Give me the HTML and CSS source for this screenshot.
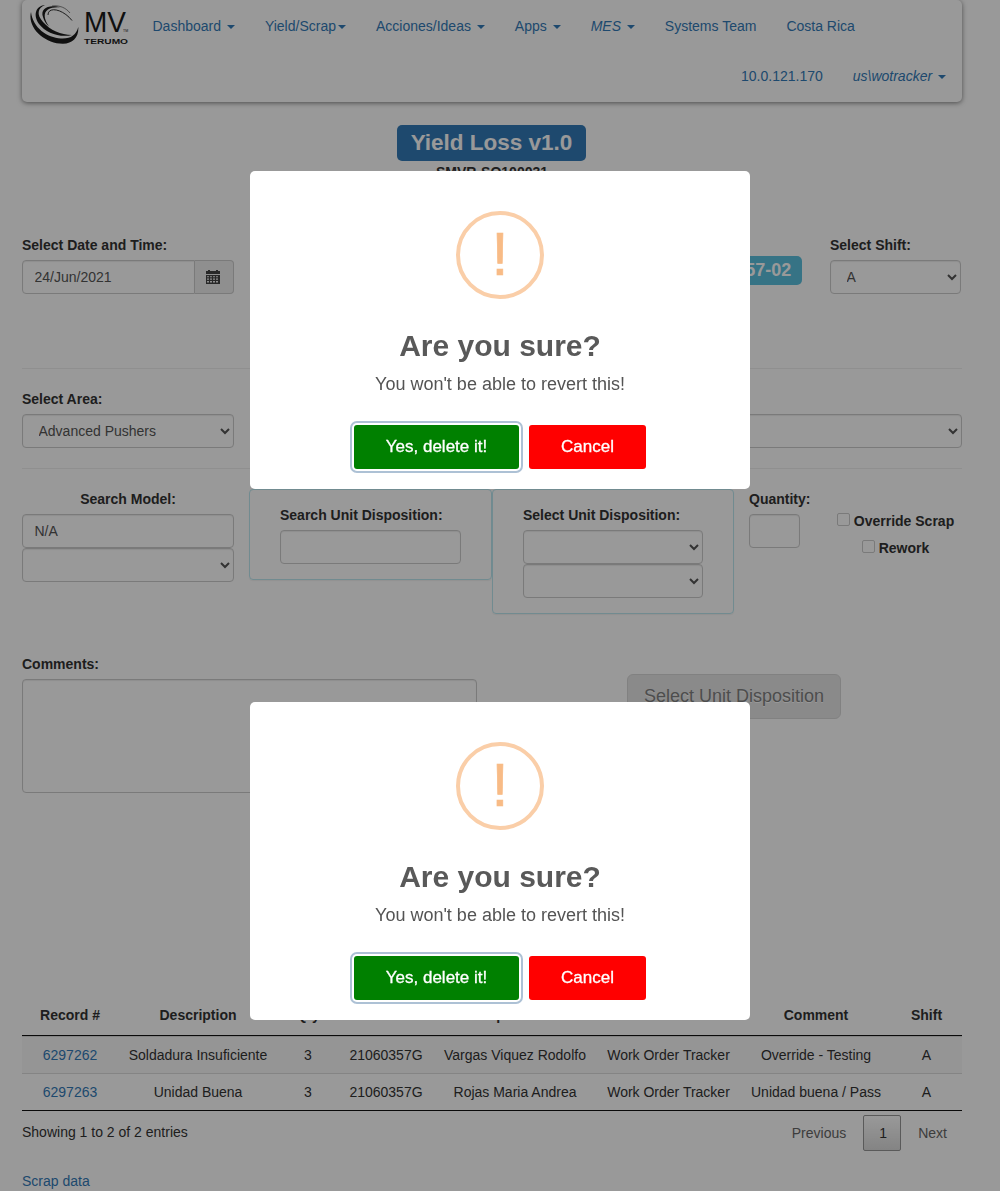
FILE: index.html
```html
<!DOCTYPE html>
<html lang="en">
<head>
<meta charset="utf-8">
<title>Yield Loss v1.0</title>
<link rel="stylesheet" href="styles.css">
</head>
<body>
<div class="page">
  <nav class="navbar">
    <div class="nav-row">
      <svg class="logo" viewBox="0 0 100 46" width="100" height="46" aria-label="MV Terumo">
        <g fill="#1c1c1c">
          <path d="M1 11C-3 27 15 43 33 42.800C43 42.500 49 36 48.300 26C46 34 41 38 31 37.500C17 36.500 3 27 1 11Z"/>
          <path d="M15 4C5 5 3 15 9 23C16 32 30 37 42 34C31 34 20 29 13 21C6 13 8 7 15 4Z"/>
          <path d="M31 6.500C18 3 10 8 13 16C14 20 16 23 19 25.500C14 18 13 12 18 8.500C21 6.500 26 6 31 6.500Z"/>
        </g>
        <g fill="none" stroke="#1c1c1c" stroke-width=".9">
          <path d="M18 14C18 5 33 8 42 19.500"/>
          <path d="M22 5C30 4 36 7 40 12" opacity=".6"/>
        </g>
        <text class="logo-mv" x="54" y="31" textLength="42" lengthAdjust="spacingAndGlyphs">MV</text>
        <text class="logo-name" x="54" y="42.500" textLength="44" lengthAdjust="spacingAndGlyphs">TERUMO</text>
        <text class="logo-tm" x="93" y="31">TM</text>
      </svg>
      <a>Dashboard <i class="caret"></i></a>
      <a>Yield/Scrap<i class="caret"></i></a>
      <a>Acciones/Ideas <i class="caret"></i></a>
      <a>Apps <i class="caret"></i></a>
      <a><em>MES</em> <i class="caret"></i></a>
      <a>Systems Team</a>
      <a>Costa Rica</a>
    </div>
    <div class="nav-row nav-right">
      <a>10.0.121.170</a>
      <a><em>us\wotracker</em> <i class="caret"></i></a>
    </div>
  </nav>

  <header class="heading">
    <h3 class="badge badge-primary">Yield Loss v1.0</h3>
    <strong>SMVR-SQ100031</strong>
  </header>

  <section class="row row-date">
    <div class="field">
      <label>Select Date and Time:</label>
      <div class="input-group">
        <input class="control" value="24/Jun/2021">
        <span class="addon">
          <svg width="14" height="15" viewBox="0 0 14 15" fill="#444">
            <path d="M0 1h2V0h2v1h6V0h2v1h2v3H0z"/>
            <path fill-rule="evenodd" d="M0 5h14v9H0zM1 6.300v1h2v-1zm3 0v1h2v-1zm3 0v1h2v-1zm3 0v1h2v-1zM1 8.500v1.200h2V8.500zm3 0v1.200h2V8.500zm3 0v1.200h2V8.500zm3 0v1.200h2V8.500zM1 11v1.500h2V11zm3 0v1.500h2V11zm3 0v1.500h2V11zm3 0v1.500h2V11z"/>
          </svg>
        </span>
      </div>
    </div>
    <div class="badge badge-info">21060357-02</div>
    <div class="field">
      <label>Select Shift:</label>
      <select class="control"><option>A</option></select>
    </div>
  </section>

  <section class="row row-area">
    <div class="field">
      <label>Select Area:</label>
      <select class="control"><option>Advanced Pushers</option></select>
    </div>
    <div class="field">
      <label>Select Defect:</label>
      <select class="control"><option></option></select>
    </div>
  </section>

  <section class="row row-model">
    <div class="field">
      <label class="centered">Search Model:</label>
      <input class="control" value="N/A">
      <select class="control"><option></option></select>
    </div>
    <div class="panel panel-search">
      <label>Search Unit Disposition:</label>
      <input class="control">
    </div>
    <div class="panel">
      <label>Select Unit Disposition:</label>
      <select class="control"><option></option></select>
      <select class="control"><option></option></select>
    </div>
    <div class="field quantity">
      <label>Quantity:</label>
      <input class="control">
    </div>
    <div class="checks">
      <label><i class="box"></i>Override Scrap</label>
      <label><i class="box"></i>Rework</label>
    </div>
  </section>

  <section class="row row-comments">
    <div class="field">
      <label>Comments:</label>
      <textarea class="control comments"></textarea>
    </div>
    <button class="disposition">Select Unit Disposition</button>
  </section>

  <table class="records">
    <colgroup><col class="w96"><col class="w160"><col class="w60"><col class="w96"><col class="w162"><col class="w145"><col class="w150"><col></colgroup>
    <thead>
      <tr><th>Record #</th><th>Description</th><th>Qty</th><th>Lot</th><th>Operator</th><th>User</th><th>Comment</th><th>Shift</th></tr>
    </thead>
    <tbody>
      <tr><td><a>6297262</a></td><td>Soldadura Insuficiente</td><td>3</td><td>21060357G</td><td>Vargas Viquez Rodolfo</td><td>Work Order Tracker</td><td>Override - Testing</td><td>A</td></tr>
      <tr><td><a>6297263</a></td><td>Unidad Buena</td><td>3</td><td>21060357G</td><td>Rojas Maria Andrea</td><td>Work Order Tracker</td><td>Unidad buena / Pass</td><td>A</td></tr>
    </tbody>
  </table>
  <div class="table-footer">
    <span class="info">Showing 1 to 2 of 2 entries</span>
    <div class="pager"><span>Previous</span><span class="current">1</span><span>Next</span></div>
  </div>
  <a class="scrap-link">Scrap data</a>
</div>

<div class="overlay">
  <div class="modal">
    <div class="warning">!</div>
    <h2>Are you sure?</h2>
    <p>You won't be able to revert this!</p>
    <div class="actions"><button class="confirm">Yes, delete it!</button><button class="cancel">Cancel</button></div>
  </div>
  <div class="modal">
    <div class="warning">!</div>
    <h2>Are you sure?</h2>
    <p>You won't be able to revert this!</p>
    <div class="actions"><button class="confirm">Yes, delete it!</button><button class="cancel">Cancel</button></div>
  </div>
</div>
</body>
</html>
```
FILE: styles.css
```css
* { box-sizing: border-box; }

body {
  margin: 0;
  height: 1191px;
  overflow: hidden;
  background: #fff;
  color: #333;
  font: 14px/20px "Liberation Sans", Arial, sans-serif;
}

button, input, select, textarea { font: inherit; }
a { color: #337ab7; }
label { display: block; font-weight: bold; margin-bottom: 5px; white-space: nowrap; }

.page { width: 940px; margin-left: 22px; }

/* Navigation */
.navbar {
  height: 102px;
  border-radius: 5px;
  box-shadow: 0 1px 5px rgba(0, 0, 0, .5);
}
.nav-row { display: flex; height: 51px; padding-top: 1px; }
.nav-row a { padding: 15px 15px 0; white-space: nowrap; }
.nav-right { justify-content: flex-end; padding-top: 0; padding-right: 1px; }
.logo { flex: none; margin: 0 -14.500px 0 8px; }
.logo + a { padding-left: 37px; }
.logo-mv { font: 29px "Liberation Sans Narrow", "Liberation Sans", sans-serif; fill: #1c1c1c; }
.logo-name { font: bold 8px "Liberation Sans", sans-serif; fill: #1c1c1c; }
.logo-tm { font: 3.500px "Liberation Sans", sans-serif; fill: #1c1c1c; }
.caret {
  display: inline-block;
  margin-left: 2px;
  vertical-align: middle;
  border-top: 4px solid #337ab7;
  border-left: 4px solid transparent;
  border-right: 4px solid transparent;
}

/* Heading */
.heading {
  display: flex;
  flex-direction: column;
  align-items: center;
  height: 133px;
  padding-top: 23px;
}
.badge { color: #fff; font-weight: bold; border-radius: 5px; white-space: nowrap; }
.badge-primary { margin: 0 1px 1px 0; padding: 0 13.700px; background: #337ab7; font-size: 22.500px; line-height: 35px; height: 36px; }
.badge-info { margin: 21px 28px 0 auto; padding: 0 10.800px; background: #5bc0de; font-size: 18px; line-height: 28px; height: 29px; }

/* Form */
.row { display: flex; align-items: flex-start; }
.field { width: 212px; }
.control {
  display: block;
  width: 100%;
  height: 34px;
  margin: 0;
  padding: 6px 12px 6px 11.500px;
  background: #fff;
  color: #555;
  border: 1px solid #ccc;
  border-radius: 4px;
  box-shadow: inset 0 1px 1px rgba(0, 0, 0, .075);
}
.input-group { display: flex; }
.input-group .control { width: 173px; border-radius: 4px 0 0 4px; }
.addon {
  display: grid;
  place-items: center;
  width: 39px;
  padding-right: 2px;
  border: 1px solid #ccc;
  border-left: 0;
  border-radius: 0 4px 4px 0;
  background: #eee;
}
.row-date { height: 134px; border-bottom: 1px solid #eee; }
.row-date .field:last-child { width: 132px; padding-right: 1px; }
.row-area { height: 100px; padding-top: 20px; border-bottom: 1px solid #eee; justify-content: space-between; }
.row-area .field:last-child { width: 698px; }
.row-model { height: 185px; padding-top: 20px; }
.centered { text-align: center; }
.panel {
  width: 242px;
  padding: 15px 30px;
  border: 1px solid #bce8f1;
  border-radius: 4px;
  box-shadow: 0 1px 1px rgba(0, 0, 0, .05);
}
.panel-search { width: 243px; margin-left: 15px; }
.quantity { width: 51px; margin-left: 15px; }
.checks { width: 119px; margin: 22px 0 0 36px; display: flex; flex-direction: column; align-items: center; gap: 7px; }
.checks label { display: flex; gap: 4px; margin: 0; }
.box { width: 13px; height: 13px; margin-top: 2px; border: 1px solid #ccc; border-radius: 2px; }
.row-comments { height: 341px; }
.row-comments .field { width: 455px; }
.comments { height: 114px; resize: none; }
.disposition {
  width: 214px;
  height: 45px;
  margin: 20px 0 0 150px;
  padding: 0 0 2px;
  background: #e6e6e6;
  border: 1px solid #d8d8d8;
  border-radius: 6px;
  color: #808080;
  font-size: 18px;
  text-shadow: 0 1px 0 #fff;
}

/* Records table */
.records { width: 940px; table-layout: fixed; border-collapse: separate; border-spacing: 0; border-bottom: 1px solid #111; }
.records th, .records td { height: 37px; padding: 0; text-align: center; white-space: nowrap; }
.records th { height: 41px; border-bottom: 1px solid #111; }
.records tbody td { border-top: 1px solid #ddd; }
.records tbody tr:first-child td { background: #f9f9f9; }
.w160 { width: 160px; }
.w60 { width: 60px; }
.w96 { width: 96px; }
.w162 { width: 162px; }
.w145 { width: 145px; }
.w150 { width: 150px; }
.table-footer { display: flex; justify-content: space-between; height: 60px; }
.info { padding-top: 11px; }
.pager { display: flex; padding-top: 4px; color: #666; }
.pager span { height: 36px; padding: 0 15px; line-height: 36px; }
.pager span:first-child { padding-right: 17px; }
.pager span:last-child { padding-left: 17px; padding-right: 15px; }
.pager .current {
  width: 38px;
  border: 1px solid #979797;
  border-radius: 2px;
  background: linear-gradient(#fff, #dcdcdc);
  color: #333;
  line-height: 34px;
}
.scrap-link { display: block; }

/* Dialogs */
.overlay {
  position: fixed;
  inset: 0;
  display: flex;
  flex-direction: column;
  align-items: center;
  gap: 213px;
  padding-top: 171px;
  background: rgba(0, 0, 0, .4);
}
.modal {
  flex: none;
  display: flex;
  flex-direction: column;
  align-items: center;
  width: 500px;
  height: 318px;
  padding-top: 40px;
  border-radius: 5px;
  background: #fff;
}
.warning {
  width: 88px;
  height: 88px;
  border: 4px solid #facea8;
  border-radius: 50%;
  color: #f8bb86;
  font-size: 61px;
  line-height: 78px;
  text-align: center;
  -webkit-text-stroke: .7px #f8bb86;
}
.modal h2 { margin: 28px 0 0; color: #595959; font-size: 30px; line-height: 37px; }
.modal p { margin: 9px 0 0; color: #545454; font-size: 18px; line-height: 22px; }
.actions { display: flex; gap: 10px; margin-top: 30px; }
.actions button { height: 44px; padding: 0; border: 0; border-radius: 3px; color: #fff; font-size: 17px; font-weight: 500; -webkit-text-stroke: .3px #fff; }
.actions .confirm { width: 165px; background: #008000; box-shadow: 0 0 0 2px #fff, 0 0 0 4px rgba(50, 100, 150, .4); }
.actions .cancel { width: 117px; background: #f00; }
```
